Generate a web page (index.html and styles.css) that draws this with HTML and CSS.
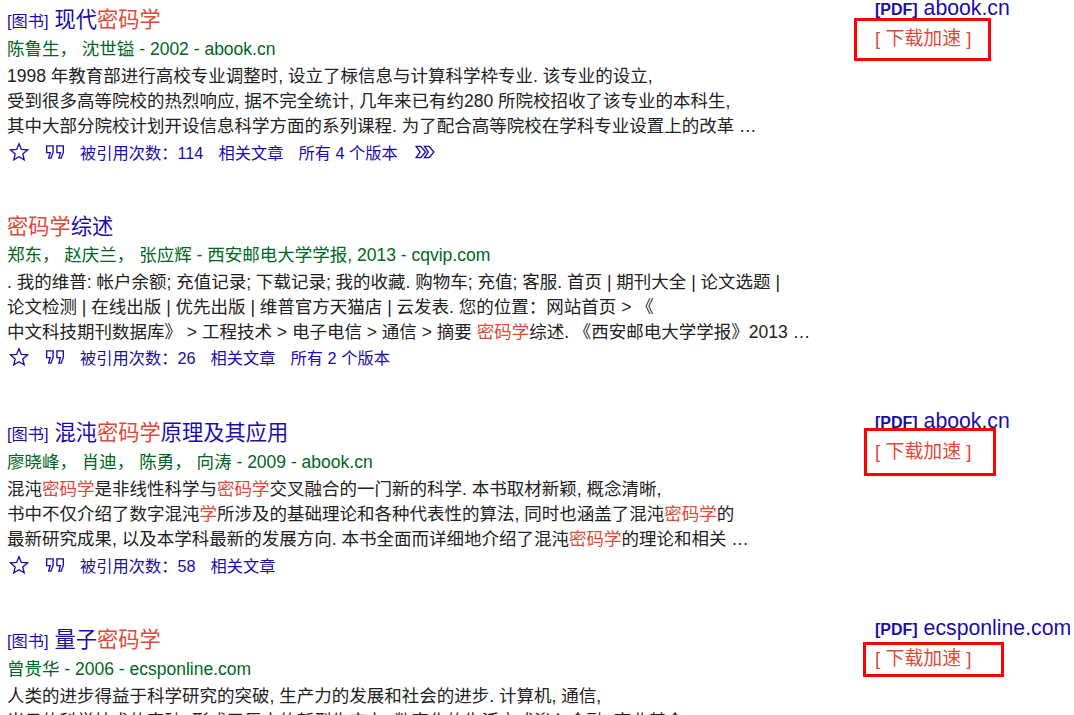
FILE: index.html
```html
<!DOCTYPE html>
<html lang="zh-CN">
<head>
  <meta charset="UTF-8">
  <title>密码学 - 学术搜索</title>
  <link rel="stylesheet" href="styles.css">
</head>
<body>
  <svg class="defs" width="0" height="0" aria-hidden="true">
    <symbol id="i-star" viewBox="0 0 18 18"><path d="M9 1.500l2.100 5.200 5.500.4-4.200 3.600 1.300 5.400L9 13.200l-4.700 2.900 1.300-5.400-4.200-3.600 5.500-.4z"/></symbol>
    <symbol id="i-cite" viewBox="0 0 18 18"><path d="M1.500 3.500h5.800v5.700L5.400 14.500H3.300L4.700 9.500H1.500zM10.700 3.500h5.800v5.700l-1.900 5.300h-2.100l1.400-5H10.700z"/></symbol>
    <symbol id="i-more" viewBox="0 0 18 18"><path d="M1 4h4.200L9.600 9l-4.400 5H1l3.600-5zM8.500 4h4.200L17 9l-4.300 5H8.500L12 9z"/></symbol>
  </svg>

  <div class="result r1">
    <div class="main">
      <h3 class="title"><span class="tag">[图书]</span> <a href="#">现代<b>密码学</b></a></h3>
      <div class="authors">陈鲁生， 沈世镒 - 2002 - abook.cn</div>
      <div class="snippet">1998 年教育部进行高校专业调整时, 设立了柡信息与计算科学枠专业. 该专业的设立,<br>受到很多高等院校的热烈响应, 据不完全统计, 几年来已有约280 所院校招收了该专业的本科生,<br>其中大部分院校计划开设信息科学方面的系列课程. 为了配合高等院校在学科专业设置上的改革 …</div>
      <div class="actions">
        <svg class="ico star"><use href="#i-star"/></svg>
        <svg class="ico cite"><use href="#i-cite"/></svg>
        <a href="#">被引用次数：114</a>
        <a href="#">相关文章</a>
        <a href="#">所有 4 个版本</a>
        <svg class="ico more"><use href="#i-more"/></svg>
      </div>
    </div>
    <div class="side">
      <div class="pdf"><b>[PDF]</b> abook.cn</div>
      <div class="speed">[ 下载加速 ]</div>
      <div class="mark m1"></div>
    </div>
  </div>

  <div class="result r2">
    <div class="main">
      <h3 class="title"><a href="#"><b>密码学</b>综述</a></h3>
      <div class="authors">郑东， 赵庆兰， 张应辉 - 西安邮电大学学报, 2013 - cqvip.com</div>
      <div class="snippet">. 我的维普: 帐户余额; 充值记录; 下载记录; 我的收藏. 购物车; 充值; 客服. 首页 | 期刊大全 | 论文选题 |<br>论文检测 | 在线出版 | 优先出版 | 维普官方天猫店 | 云发表. 您的位置：网站首页 &gt; 《<br>中文科技期刊数据库》 &gt; 工程技术 &gt; 电子电信 &gt; 通信 &gt; 摘要 <b>密码学</b>综述. 《西安邮电大学学报》2013 …</div>
      <div class="actions">
        <svg class="ico star"><use href="#i-star"/></svg>
        <svg class="ico cite"><use href="#i-cite"/></svg>
        <a href="#">被引用次数：26</a>
        <a href="#">相关文章</a>
        <a href="#">所有 2 个版本</a>
      </div>
    </div>
  </div>

  <div class="result r3">
    <div class="main">
      <h3 class="title"><span class="tag">[图书]</span> <a href="#">混沌<b>密码学</b>原理及其应用</a></h3>
      <div class="authors">廖晓峰， 肖迪， 陈勇， 向涛 - 2009 - abook.cn</div>
      <div class="snippet">混沌<b>密码学</b>是非线性科学与<b>密码学</b>交叉融合的一门新的科学. 本书取材新颖, 概念清晰,<br>书中不仅介绍了数字混沌<b>学</b>所涉及的基础理论和各种代表性的算法, 同时也涵盖了混沌<b>密码学</b>的<br>最新研究成果, 以及本学科最新的发展方向. 本书全面而详细地介绍了混沌<b>密码学</b>的理论和相关 …</div>
      <div class="actions">
        <svg class="ico star"><use href="#i-star"/></svg>
        <svg class="ico cite"><use href="#i-cite"/></svg>
        <a href="#">被引用次数：58</a>
        <a href="#">相关文章</a>
      </div>
    </div>
    <div class="side">
      <div class="pdf"><b>[PDF]</b> abook.cn</div>
      <div class="speed">[ 下载加速 ]</div>
      <div class="mark m3"></div>
    </div>
  </div>

  <div class="result r4">
    <div class="main">
      <h3 class="title"><span class="tag">[图书]</span> <a href="#">量子<b>密码学</b></a></h3>
      <div class="authors">曾贵华 - 2006 - ecsponline.com</div>
      <div class="snippet">人类的进步得益于科学研究的突破, 生产力的发展和社会的进步. 计算机, 通信,<br>当日的科学技术的突破, 形成了巨大的新型生产力. 数字化的生活方式渗入金融, 商业基金</div>
    </div>
    <div class="side">
      <div class="pdf"><b>[PDF]</b> ecsponline.com</div>
      <div class="speed">[ 下载加速 ]</div>
      <div class="mark m4"></div>
    </div>
  </div>
</body>
</html>
```

FILE: styles.css
```css
html, body {
  height: 715px;
  overflow: hidden;
}
body {
  margin: 0;
  background: #fff;
  font-family: "Liberation Sans", "Noto Sans CJK SC", sans-serif;
  font-size: 17.5px;
  color: #222;
}
.defs {
  position: absolute;
}
a {
  color: #1a0dab;
  text-decoration: none;
}
b {
  font-weight: normal;
  color: #dd4b39;
}
.result {
  display: flex;
  height: 206.5px;
  padding-left: 7px;
}
.main {
  width: 848px;
  flex: none;
  padding-top: 7px;
}
.title {
  margin: 0;
  font-size: 21.25px;
  font-weight: normal;
  line-height: 27px;
}
.tag {
  font-size: 16.25px;
  color: #1a0dab;
}
.authors {
  color: #006621;
  line-height: 25px;
  margin-top: 2px;
}
.snippet {
  line-height: 25px;
  margin-top: 2px;
  white-space: nowrap;
}
.actions {
  display: flex;
  align-items: center;
  height: 25px;
  font-size: 16.25px;
}
.actions a {
  margin-right: 15px;
}
.ico {
  width: 20px;
  height: 20px;
  fill: none;
  stroke: #1a0dab;
  stroke-width: 1.2;
  flex: none;
}
.star {
  margin: 0 16px 0 2px;
}
.cite {
  margin-right: 15px;
}
.more {
  margin-left: 2px;
}
.side {
  position: relative;
  padding: 0 0 0 20px;
  flex: 1;
  white-space: nowrap;
}
.pdf {
  font-size: 21.25px;
  line-height: 16px;
  color: #1a0dab;
}
.pdf b {
  font-size: 16px;
  font-weight: bold;
  color: #1a0dab;
}
.speed {
  color: #dd4b39;
  font-size: 18.9px;
  line-height: 26px;
  margin-top: 8px;
}
/* red boxes drawn over the results */
.mark {
  position: absolute;
  border: 3px solid #f00;
  box-sizing: border-box;
}
.m1 {
  left: -1px;
  top: 18px;
  width: 137px;
  height: 43px;
}
.m3 {
  left: 9px;
  top: 15px;
  width: 132px;
  height: 48px;
}
.m4 {
  left: 8px;
  top: 22px;
  width: 141px;
  height: 35px;
}
```
